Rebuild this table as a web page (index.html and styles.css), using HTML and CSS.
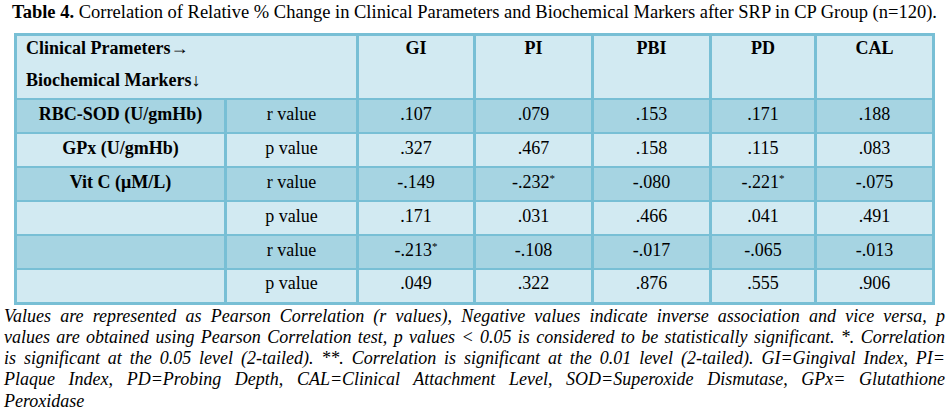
FILE: index.html
```html
<!DOCTYPE html>
<html>
<head>
<meta charset="utf-8">
<link rel="stylesheet" href="styles.css">
</head>
<body>
<div class="page">
  <p class="caption"><b>Table 4.</b> Correlation of Relative % Change in Clinical Parameters and Biochemical Markers after SRP in CP Group (n=120).</p>
  <table class="corr">
    <colgroup>
      <col class="c-marker"><col class="c-stat"><col class="c-gi"><col class="c-pi"><col class="c-pbi"><col class="c-pd"><col class="c-cal">
    </colgroup>
    <thead>
      <tr class="head">
        <th colspan="2" class="lead">
          <div class="hl1">Clinical Prameters→</div>
          <div class="hl2">Biochemical Markers↓</div>
        </th>
        <th><div class="hl1">GI</div></th>
        <th><div class="hl1">PI</div></th>
        <th><div class="hl1">PBI</div></th>
        <th><div class="hl1">PD</div></th>
        <th><div class="hl1">CAL</div></th>
      </tr>
    </thead>
    <tbody>
      <tr class="dark">
        <td class="mk">RBC-SOD (U/gmHb)</td><td>r value</td><td>.107</td><td>.079</td><td>.153</td><td>.171</td><td>.188</td>
      </tr>
      <tr class="light">
        <td class="mk">GPx (U/gmHb)</td><td>p value</td><td>.327</td><td>.467</td><td>.158</td><td>.115</td><td>.083</td>
      </tr>
      <tr class="dark">
        <td class="mk">Vit C (μM/L)</td><td>r value</td><td>-.149</td><td>-.232<sup>*</sup></td><td>-.080</td><td>-.221<sup>*</sup></td><td>-.075</td>
      </tr>
      <tr class="light">
        <td class="mk"></td><td>p value</td><td>.171</td><td>.031</td><td>.466</td><td>.041</td><td>.491</td>
      </tr>
      <tr class="dark">
        <td class="mk"></td><td>r value</td><td>-.213<sup>*</sup></td><td>-.108</td><td>-.017</td><td>-.065</td><td>-.013</td>
      </tr>
      <tr class="light">
        <td class="mk"></td><td>p value</td><td>.049</td><td>.322</td><td>.876</td><td>.555</td><td>.906</td>
      </tr>
    </tbody>
  </table>
  <div class="note">
    <span class="jl">Values are represented as Pearson Correlation (r values), Negative values indicate inverse association and vice versa, p</span>
    <span class="jl">values are obtained using Pearson Correlation test, p values &lt; 0.05 is considered to be statistically significant. *. Correlation</span>
    <span class="jl">is significant at the 0.05 level (2-tailed). **. Correlation is significant at the 0.01 level (2-tailed). GI=Gingival Index, PI=</span>
    <span class="jl">Plaque Index, PD=Probing Depth, CAL=Clinical Attachment Level, SOD=Superoxide Dismutase, GPx= Glutathione</span>
    <span class="last">Peroxidase</span>
  </div>
</div>
</body>
</html>
```
FILE: styles.css
```css
html, body {
  margin: 0;
  padding: 0;
  background: #ffffff;
}
.page {
  width: 950px;
  font-family: "Liberation Serif", "Times New Roman", serif;
  color: #000;
}
.caption {
  margin: 0;
  padding: 2px 0 0 12px;
  font-size: 18.5px;
  line-height: 20px;
  white-space: nowrap;
}
.corr {
  margin: 11px 0 0 14px;
  width: 921px;
  table-layout: fixed;
  border-collapse: collapse;
  border: 3px solid #78bfd5;
  font-size: 18px;
}
.c-marker { width: 210px; }
.c-stat { width: 132px; }
.c-gi { width: 117px; }
.c-pi { width: 118px; }
.c-pbi { width: 118px; }
.c-pd { width: 105px; }
.c-cal { width: 118px; }
.corr th,
.corr td {
  border-left: 3px solid #78bfd5;
  border-right: 3px solid #78bfd5;
  border-top: 2px solid #78bfd5;
  border-bottom: 2px solid #78bfd5;
  padding: 0;
  text-align: center;
}
.head th {
  background: #d2eaf2;
  vertical-align: top;
  font-weight: bold;
  height: 62px;
}
.head th.lead {
  text-align: left;
  padding-left: 9px;
}
.hl1 {
  line-height: 24px;
}
.hl2 {
  margin-top: 8px;
  line-height: 24px;
}
.corr td {
  height: 34px;
  line-height: 20px;
  padding-bottom: 5px;
  box-sizing: border-box;
  vertical-align: middle;
}
.corr td.mk {
  font-weight: bold;
}
.dark td {
  background: #a6d4e2;
}
.light td {
  background: #d2eaf2;
}
.corr sup {
  font-size: 11px;
  line-height: 0;
  vertical-align: 6px;
}
.note {
  padding: 1px 5px 0 4px;
  font-style: italic;
  font-size: 18px;
  line-height: 21.3px;
}
.jl {
  display: block;
  text-align: justify;
  text-align-last: justify;
}
.last {
  display: block;
}
```
